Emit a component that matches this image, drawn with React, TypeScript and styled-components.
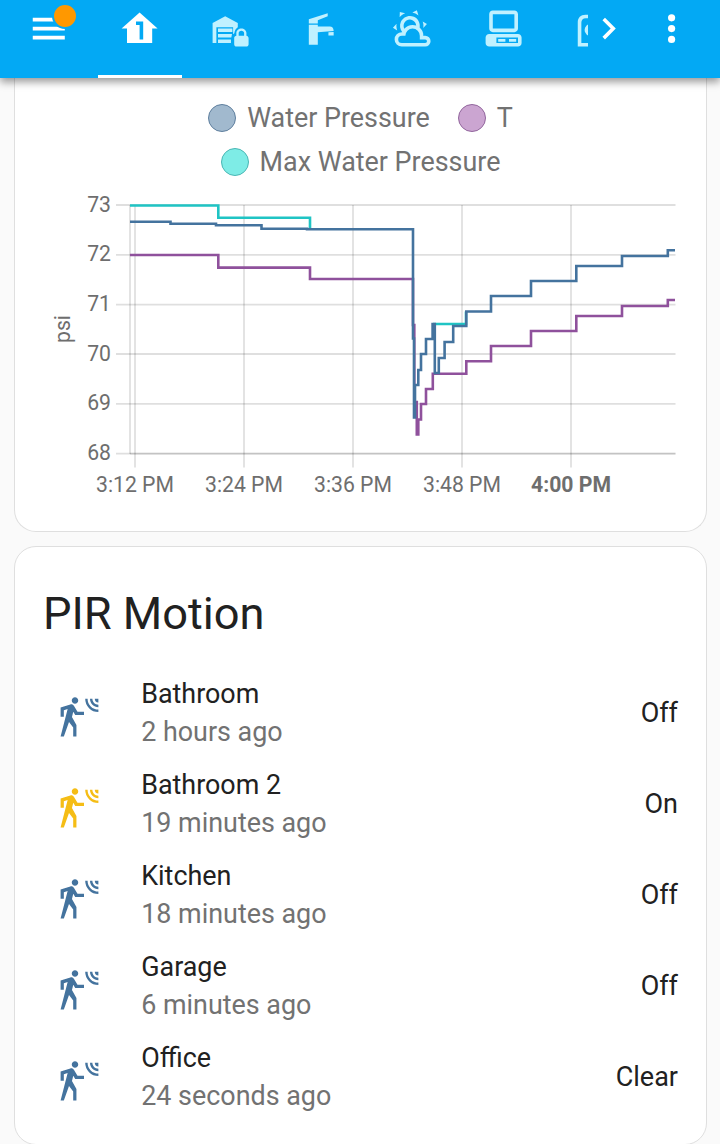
import React from "react";
import styled, { createGlobalStyle } from "styled-components";

const GlobalStyle = createGlobalStyle`
  * { box-sizing: border-box; }
  body {
    margin: 0;
    background: #fafafa;
    color: #212121;
    font-family: Roboto, sans-serif;
  }
`;

const Page = styled.div`
  display: flex;
  flex-direction: column;
  width: 720px;
  height: 1144px;
  overflow: hidden;
`;

const Header = styled.header`
  position: relative;
  z-index: 1;
  display: flex;
  flex: none;
  height: 78px;
  padding-left: 7px;
  background: #03a9f4;
  color: #fff;
  box-shadow: 0 4px 8px 0 rgba(0, 0, 0, 0.4);
`;

const HeaderButton = styled.button<{ $width: number }>`
  position: relative;
  display: flex;
  flex: none;
  justify-content: center;
  width: ${(p) => p.$width}px;
  height: 78px;
  padding: 7.3px 0 0;
  border: 0;
  background: none;
  color: inherit;
`;

const Badge = styled.span`
  position: absolute;
  top: 3px;
  left: 45px;
  width: 26px;
  height: 26px;
  border: 2.2px solid #03a9f4;
  border-radius: 50%;
  background: #ff9800;
`;

const Tabs = styled.nav`
  display: flex;
  flex: none;
  width: 497px;
  height: 78px;
  padding-left: 7px;
  overflow: hidden;
`;

const Tab = styled.a<{ $active?: boolean }>`
  display: flex;
  flex: none;
  justify-content: center;
  width: 84px;
  margin-right: 6.8px;
  padding-top: 7.3px;
  color: ${(p) => (p.$active ? "#fff" : "#c0f1ff")};
  border-bottom: 3px solid ${(p) => (p.$active ? "#fff" : "transparent")};
`;

const Icon = styled.svg`
  display: block;
  flex: none;
  width: 43.2px;
  height: 43.2px;
  fill: currentColor;
`;

const Cards = styled.main`
  display: flex;
  flex-direction: column;
  gap: 14px;
  padding: 0 13px 0 14px;
`;

const Card = styled.section<{ $height: number; $cut?: boolean }>`
  flex: none;
  height: ${(p) => p.$height}px;
  border: 1px solid #dfdfdf;
  border-top-width: ${(p) => (p.$cut ? 0 : 1)}px;
  border-radius: ${(p) => (p.$cut ? "0 0 22px 22px" : "22px")};
  background: #fff;
`;

const Legend = styled.ul`
  display: flex;
  flex-wrap: wrap;
  justify-content: center;
  column-gap: 28px;
  margin: 0;
  padding: 18px 150px 0;
  list-style: none;
`;

const LegendItem = styled.li`
  display: flex;
  align-items: center;
  gap: 11px;
  height: 44px;
  color: #727272;
  font-size: 26.9px;
  white-space: nowrap;
`;

const Swatch = styled.span<{ $fill: string; $line: string }>`
  width: 28px;
  height: 28px;
  border: 1px solid ${(p) => p.$line};
  border-radius: 50%;
  background: ${(p) => p.$fill};
`;

const Chart = styled.svg`
  display: block;
  width: 691px;
  height: 320px;
  font-family: Roboto, sans-serif;
  font-size: 21.2px;
  fill: #6e6e6e;
`;

const Title = styled.h1`
  margin: 0;
  padding: 39px 28px 0 28px;
  font-size: 45.2px;
  font-weight: 400;
  line-height: 56px;
`;

const Rows = styled.div`
  padding: 25px 28px 0 41px;
`;

const Row = styled.div`
  display: flex;
  align-items: center;
  height: 91px;
`;

const StateIcon = styled(Icon)<{ $on: boolean }>`
  color: ${(p) => (p.$on ? "#f5bd15" : "#44739e")};
  margin: 11.5px 41.5px 0 0.5px;
`;

const Info = styled.div`
  flex: 1;
  font-size: 26.9px;
  line-height: 38px;
`;

const Name = styled.div``;

const Ago = styled.div`
  color: #727272;
`;

const State = styled.div`
  font-size: 27px;
  line-height: 38px;
`;

const homeOne = "M12,3L2,12H5V20H19V12H22L12,3M10,8H14V18H12V10H10V8Z";
const weather =
  "M12.74,5.47C15.1,6.5 16.35,9.03 15.92,11.46C17.19,12.56 18,14.19 18,16V16.17C18.31,16.06 18.65,16 19,16A3,3 0 0,1 22,19A3,3 0 0,1 19,22H6A4,4 0 0,1 2,18A4,4 0 0,1 6,14H6.27C5,12.45 4.6,10.24 5.5,8.26C6.72,5.5 9.97,4.24 12.74,5.47M11.93,7.3C10.16,6.5 8.09,7.31 7.31,9.07C6.85,10.09 6.93,11.22 7.41,12.13C8.5,10.83 10.16,10 12,10C12.7,10 13.38,10.12 14,10.34C13.94,9.06 13.18,7.86 11.93,7.3M13.55,3.64C13,3.4 12.45,3.23 11.88,3.12L14.37,1.82L15.27,4.71C14.76,4.29 14.19,3.93 13.55,3.64M6.09,4.44C5.6,4.79 5.17,5.19 4.8,5.63L4.91,2.82L7.87,3.5C7.25,3.71 6.65,4.03 6.09,4.44M18,9.71C17.91,9.12 17.78,8.55 17.59,8L19.97,9.5L17.92,11.73C18.03,11.08 18.05,10.4 18,9.71M3.04,11.3C3.11,11.9 3.24,12.47 3.43,13L1.06,11.5L3.1,9.28C3,9.93 2.97,10.61 3.04,11.3M19,18H16V16A4,4 0 0,0 12,12A4,4 0 0,0 8,16H6A2,2 0 0,0 4,18A2,2 0 0,0 6,20H19A1,1 0 0,0 20,19A1,1 0 0,0 19,18Z";
const desktop =
  "M6,2C4.89,2 4,2.89 4,4V12C4,13.11 4.89,14 6,14H18C19.11,14 20,13.11 20,12V4C20,2.89 19.11,2 18,2H6M6,4H18V12H6V4M4,15C2.89,15 2,15.89 2,17V20C2,21.11 2.89,22 4,22H20C21.11,22 22,21.11 22,20V17C22,15.89 21.11,15 20,15H4M8,17H20V20H8V17M9,17.75V19.25H13V17.75H9M15,17.75V19.25H19V17.75H15Z";
const garageLock =
  "M2,20V8.9L9,5.2L16,8.9V11.2C14.9,12 14.2,13 14.1,14.6L13.4,15.2V11.2H4.1V20H2M5,12H13V13.9H5V12M5,15H12.8L12.4,16.9H5V15M5,18H12.2V20H5V18M20.8,16V14.5C20.8,13.1 19.4,12 18,12S15.2,13.1 15.2,14.5V16C14.6,16 14,16.6 14,17.2V20.7C14,21.4 14.6,22 15.2,22H20.7C21.4,22 22,21.4 22,20.8V17.3C22,16.6 21.4,16 20.8,16M19.5,16H16.5V14.5C16.5,13.7 17.2,13.2 18,13.2S19.5,13.7 19.5,14.5V16Z";
const faucet =
  "M4.9,9.1V6.8L15.4,3.5V5.2L9.9,7.4V9.1H4.9M4.9,9.9H9.9V10.8H16.6C17.8,10.8 18.7,11.6 18.7,13.3L9.9,14V21H4.9V9.9M15.8,14.1L18.7,13.9V15.9H15.8V14.1Z";
const motion =
  "M10,0.2C9,0.2 8.2,1 8.2,2C8.2,3 9,3.8 10,3.8C11,3.8 11.8,3 11.8,2C11.8,1 11,0.2 10,0.2M15.67,1A7.33,7.33 0 0,0 23,8.33V7A6,6 0 0,1 17,1H15.67M18.33,1C18.33,3.58 20.42,5.67 23,5.67V4.33C21.16,4.33 19.67,2.84 19.67,1H18.33M21,1A2,2 0 0,0 23,3V1H21M7.92,4.03C7.75,4.03 7.58,4.06 7.42,4.11L2,5.8V11H3.8V7.33L5.91,6.67L2,22H3.8L6.67,13.89L9,17V22H10.8V15.59L8.31,11.05L9.04,8.18L10.12,10H15V8.2H11.38L9.38,4.87C9.08,4.37 8.54,4.03 7.92,4.03Z";

const rows = [
  { name: "Bathroom", ago: "2 hours ago", state: "Off", on: false },
  { name: "Bathroom 2", ago: "19 minutes ago", state: "On", on: true },
  { name: "Kitchen", ago: "18 minutes ago", state: "Off", on: false },
  { name: "Garage", ago: "6 minutes ago", state: "Off", on: false },
  { name: "Office", ago: "24 seconds ago", state: "Clear", on: false },
];

const yTicks = [
  { label: "73", y: 205 },
  { label: "72", y: 254.8 },
  { label: "71", y: 304.6 },
  { label: "70", y: 354 },
  { label: "69", y: 403.8 },
  { label: "68", y: 453.6 },
];

const xTicks = [
  { label: "3:12 PM", x: 135 },
  { label: "3:24 PM", x: 244 },
  { label: "3:36 PM", x: 353 },
  { label: "3:48 PM", x: 462 },
  { label: "4:00 PM", x: 571, bold: true },
];

const maxLine = "M130,205.5H218.3V217.8H310V229.3M433,324H466V311.5";
const lowLine =
  "M130,255H218.3V267.6H310V279H413V325H414.3V402H416.8V434.5H418.3V419.5H421V404H426V389H432.8V373.7H466.3V361.3H491V346H531V331H576.3V316H622V306H667.8V300H675";
const pressureLine =
  "M130,221.7H170.5V223.7H216V225.2H261.5V228.8H307V229.3H413V338.5H414V417.5H415V385H418.3V370H421V354H426V339H432.6V324H434.8V373H438.8V358H444.6V342H453.2V326H466.3V311.5H491V296H531V281H576.3V266H622V256H667.8V250.2H675";

export default function App() {
  return (
    <Page>
      <GlobalStyle />
      <Header>
        <HeaderButton $width={84} aria-label="Menu">
          <Icon viewBox="0 0 24 24">
            <path d="M3.2,6H21V8H3.2V6M3.2,11H21V13H3.2V11M3.2,16H21V18H3.2V16Z" />
          </Icon>
          <Badge />
        </HeaderButton>
        <Tabs>
          <Tab $active>
            <Icon viewBox="0 0 24 24"><path d={homeOne} /></Icon>
          </Tab>
          {[garageLock, faucet, weather, desktop].map((d) => (
            <Tab key={d}>
              <Icon viewBox="0 0 24 24"><path d={d} /></Icon>
            </Tab>
          ))}
          <Tab>
            <Icon viewBox="0 0 24 24">
              <path d="M7.5,4.3C4.8,4.3 3.2,5.9 3.2,8.6V22H10V20H5.2V8.8C5.2,7.1 6,6.2 7.7,6.2H18V4.3H7.5Z" />
              <circle cx="10.4" cy="12.8" r="3.4" />
            </Icon>
          </Tab>
        </Tabs>
        <HeaderButton $width={42} aria-label="More tabs">
          <Icon viewBox="0 0 24 24">
            <path d="M8.59,16.58L13.17,12L8.59,7.41L10,6L16,12L10,18L8.59,16.58Z" />
          </Icon>
        </HeaderButton>
        <HeaderButton $width={84} aria-label="Options">
          <Icon viewBox="0 0 24 24">
            <circle cx="12" cy="6" r="2" />
            <circle cx="12" cy="12" r="2" />
            <circle cx="12" cy="18" r="2" />
          </Icon>
        </HeaderButton>
      </Header>
      <Cards>
        <Card $height={454} $cut>
          <Legend>
            <LegendItem>
              <Swatch $fill="#a1b9ce" $line="#5f7f9e" />
              Water Pressure
            </LegendItem>
            <LegendItem>
              <Swatch $fill="#cba5d1" $line="#92669d" />T
            </LegendItem>
            <LegendItem>
              <Swatch $fill="#7eece6" $line="#4ab6b4" />
              Max Water Pressure
            </LegendItem>
          </Legend>
          <Chart viewBox="15 184 691 320">
            <g stroke="#000" strokeOpacity="0.125" strokeWidth="1.8">
              {yTicks.map((t) => (
                <line key={t.label} x1="116" x2="675.5" y1={t.y} y2={t.y} />
              ))}
              <line x1="130" x2="130" y1="205" y2="454" />
              {xTicks.map((t) => (
                <line key={t.label} x1={t.x} x2={t.x} y1="205" y2="467.5" />
              ))}
              <line x1="130" x2="675.5" y1="453.6" y2="453.6" />
            </g>
            {yTicks.map((t) => (
              <text key={t.label} x="111" y={t.y + 6.5} textAnchor="end">{t.label}</text>
            ))}
            {xTicks.map((t) => (
              <text key={t.label} x={t.x} y="492" textAnchor="middle" fontWeight={t.bold ? 700 : 400}>
                {t.label}
              </text>
            ))}
            <text transform="translate(69.5 329) rotate(-90)" textAnchor="middle">psi</text>
            <g fill="none" strokeWidth="2.6">
              <path d={maxLine} stroke="#1fc4c4" />
              <path d={lowLine} stroke="#8f519c" />
              <path d={pressureLine} stroke="#44739e" />
            </g>
          </Chart>
        </Card>
        <Card $height={599}>
          <Title>PIR Motion</Title>
          <Rows>
            {rows.map((r) => (
              <Row key={r.name}>
                <StateIcon $on={r.on} viewBox="0 0 24 24"><path d={motion} /></StateIcon>
                <Info>
                  <Name>{r.name}</Name>
                  <Ago>{r.ago}</Ago>
                </Info>
                <State>{r.state}</State>
              </Row>
            ))}
          </Rows>
        </Card>
      </Cards>
    </Page>
  );
}
